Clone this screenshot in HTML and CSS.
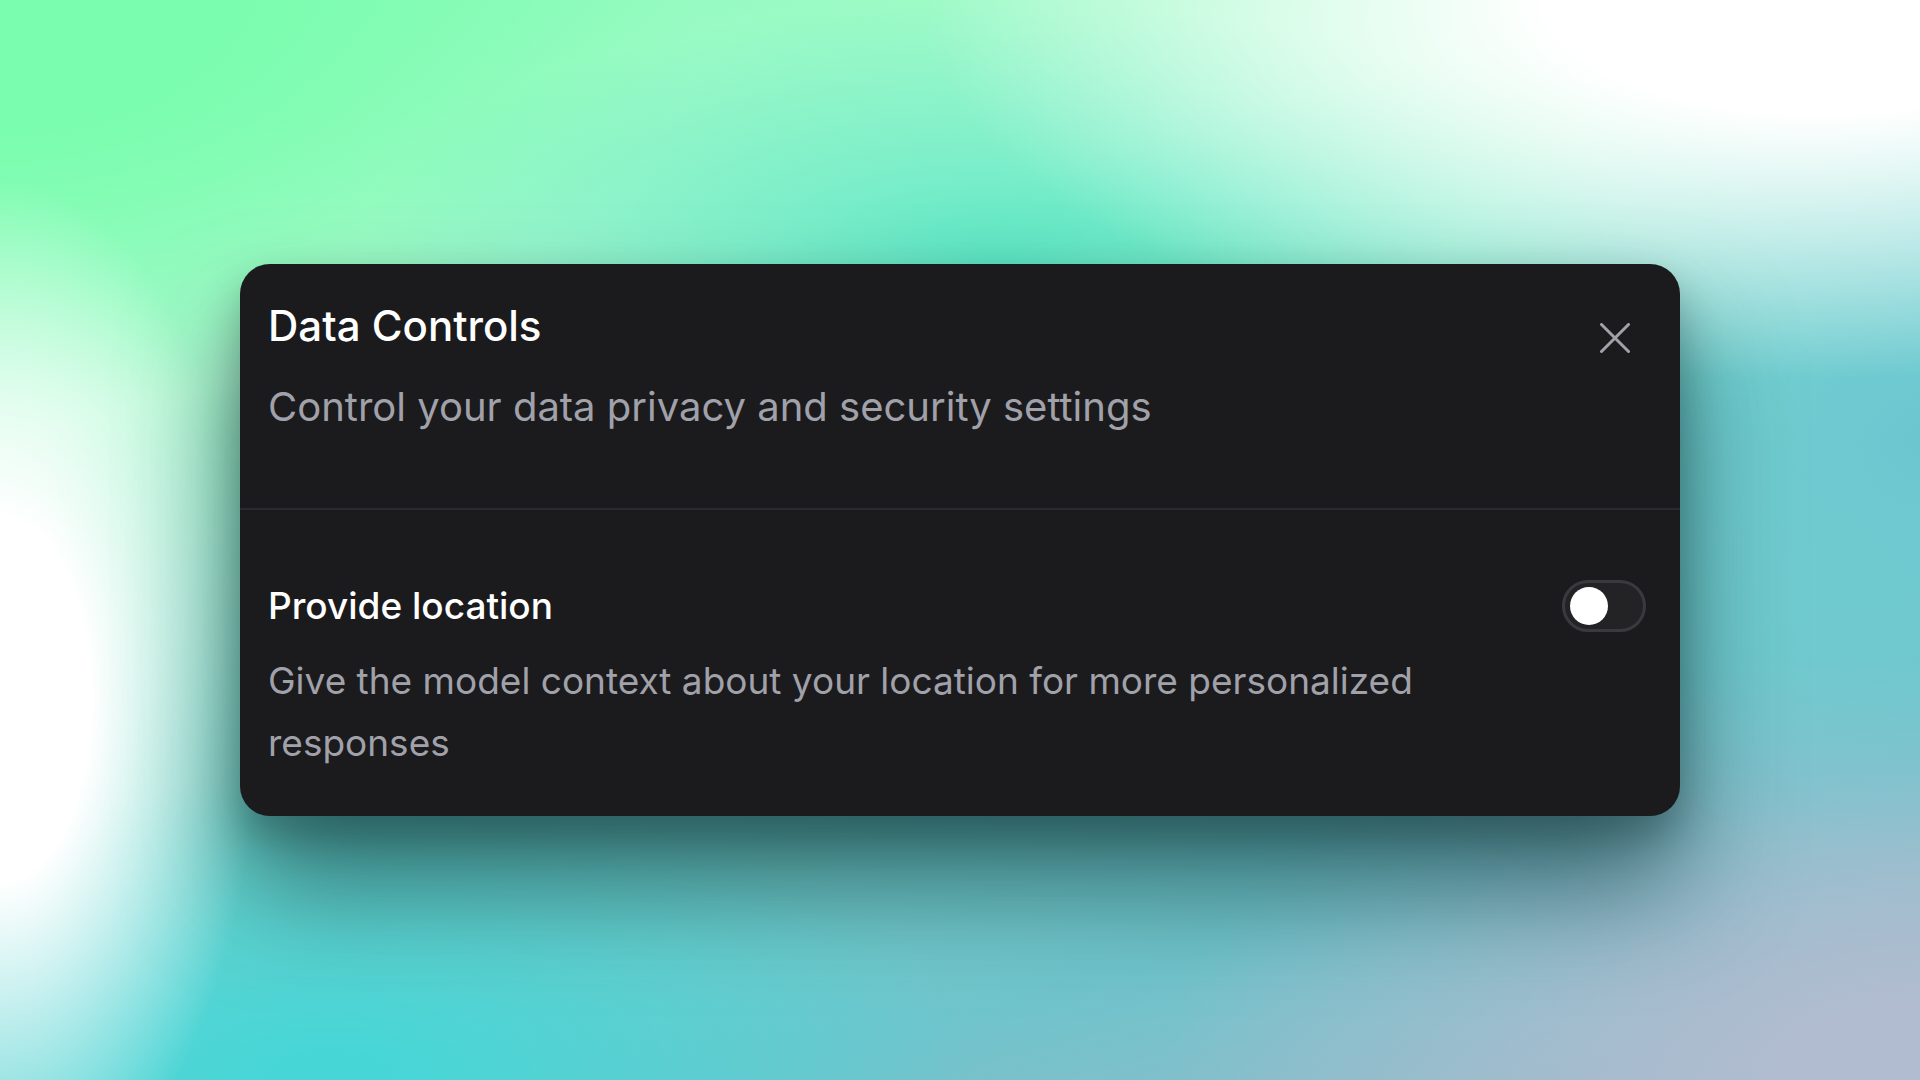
FILE: index.html
```html
<!DOCTYPE html>
<html lang="en">
<head>
<meta charset="utf-8">
<title>Data Controls</title>
<link rel="stylesheet" href="styles.css">
</head>
<body>
<div class="stage">
  <section class="dialog">
    <header class="dialog-header">
      <div class="dialog-heading">
        <h2 class="dialog-title">Data Controls</h2>
        <p class="dialog-subtitle">Control your data privacy and security settings</p>
      </div>
      <button class="close-btn" aria-label="Close">
        <svg viewBox="0 0 30 30" width="30" height="30" fill="none" stroke="currentColor" stroke-width="3" stroke-linecap="round">
          <path d="M1.5 1.5 L28.5 28.5 M28.5 1.5 L1.5 28.5"/>
        </svg>
      </button>
    </header>
    <div class="dialog-body">
      <div class="setting-row">
        <span class="setting-label">Provide location</span>
        <span class="toggle"><span class="knob"></span></span>
      </div>
      <p class="setting-desc">Give the model context about your location for more personalized responses</p>
    </div>
  </section>
</div>
</body>
</html>
```

FILE: styles.css
```css
* { box-sizing: border-box; }
html, body { margin: 0; padding: 0; }
body {
  width: 1920px;
  height: 1080px;
  overflow: hidden;
  font-family: "Inter", "Noto Sans", sans-serif;
  background:
    radial-gradient(ellipse 900px 380px at 1820px 0px, #ffffff 30%, rgba(255,255,255,0) 100%),
    radial-gradient(ellipse 260px 520px at 0px 700px, #ffffff 35%, rgba(255,255,255,0) 100%),
    radial-gradient(ellipse 650px 260px at 1000px 260px, rgba(90,230,196,0.95) 0%, rgba(90,230,196,0) 100%),
    radial-gradient(ellipse 520px 420px at 1920px 440px, #6cc6d0 0%, rgba(108,198,208,0) 100%),
    radial-gradient(ellipse 650px 300px at 330px 1080px, #47d6d6 10%, rgba(71,214,214,0) 100%),
    radial-gradient(ellipse 760px 430px at 1920px 1080px, #b2bcd0 15%, rgba(178,188,208,0) 100%),
    radial-gradient(ellipse 700px 400px at 0px 0px, #7afdae 30%, rgba(122,253,174,0) 100%),
    linear-gradient(165deg, #84fbb6 0%, #b0fad2 28%, #78dcd0 55%, #70c4cc 80%, #98b8c8 100%);
}
.stage {
  width: 100%;
  height: 100%;
  display: flex;
  align-items: center;
  justify-content: center;
}
.dialog {
  width: 1440px;
  background: #1b1b1e;
  border-radius: 30px;
  box-shadow: 0 70px 110px rgba(10, 45, 50, 0.6), 0 20px 40px rgba(0, 0, 0, 0.25);
}
.dialog-header {
  display: flex;
  justify-content: space-between;
  align-items: flex-start;
  padding: 36px 28px 75px 28px;
  border-bottom: 2px solid #2a2a2e;
}
.dialog-title {
  margin: 0;
  font-size: 42px;
  line-height: 52px;
  font-weight: 500;
  color: #ffffff;
}
.dialog-subtitle {
  margin: 29px 0 0 0;
  font-size: 40px;
  line-height: 52px;
  font-weight: 400;
  color: #a1a1aa;
}
.close-btn {
  margin: 23px 22px 0 0;
  padding: 0;
  width: 30px;
  height: 30px;
  border: 0;
  background: transparent;
  color: #a1a1a8;
  display: flex;
}
.dialog-body {
  padding: 70px 34px 42px 28px;
}
.setting-row {
  display: flex;
  align-items: center;
  justify-content: space-between;
}
.setting-label {
  font-size: 37px;
  line-height: 52px;
  font-weight: 500;
  color: #ffffff;
}
.toggle {
  width: 84px;
  height: 52px;
  border-radius: 26px;
  border: 3px solid #3a3a3e;
  background: #232326;
  display: flex;
  align-items: center;
  padding-left: 5px;
}
.knob {
  width: 38px;
  height: 38px;
  border-radius: 50%;
  background: #ffffff;
}
.setting-desc {
  margin: 18px 0 0 0;
  max-width: 1260px;
  font-size: 37px;
  line-height: 62px;
  color: #a1a1aa;
}
```
